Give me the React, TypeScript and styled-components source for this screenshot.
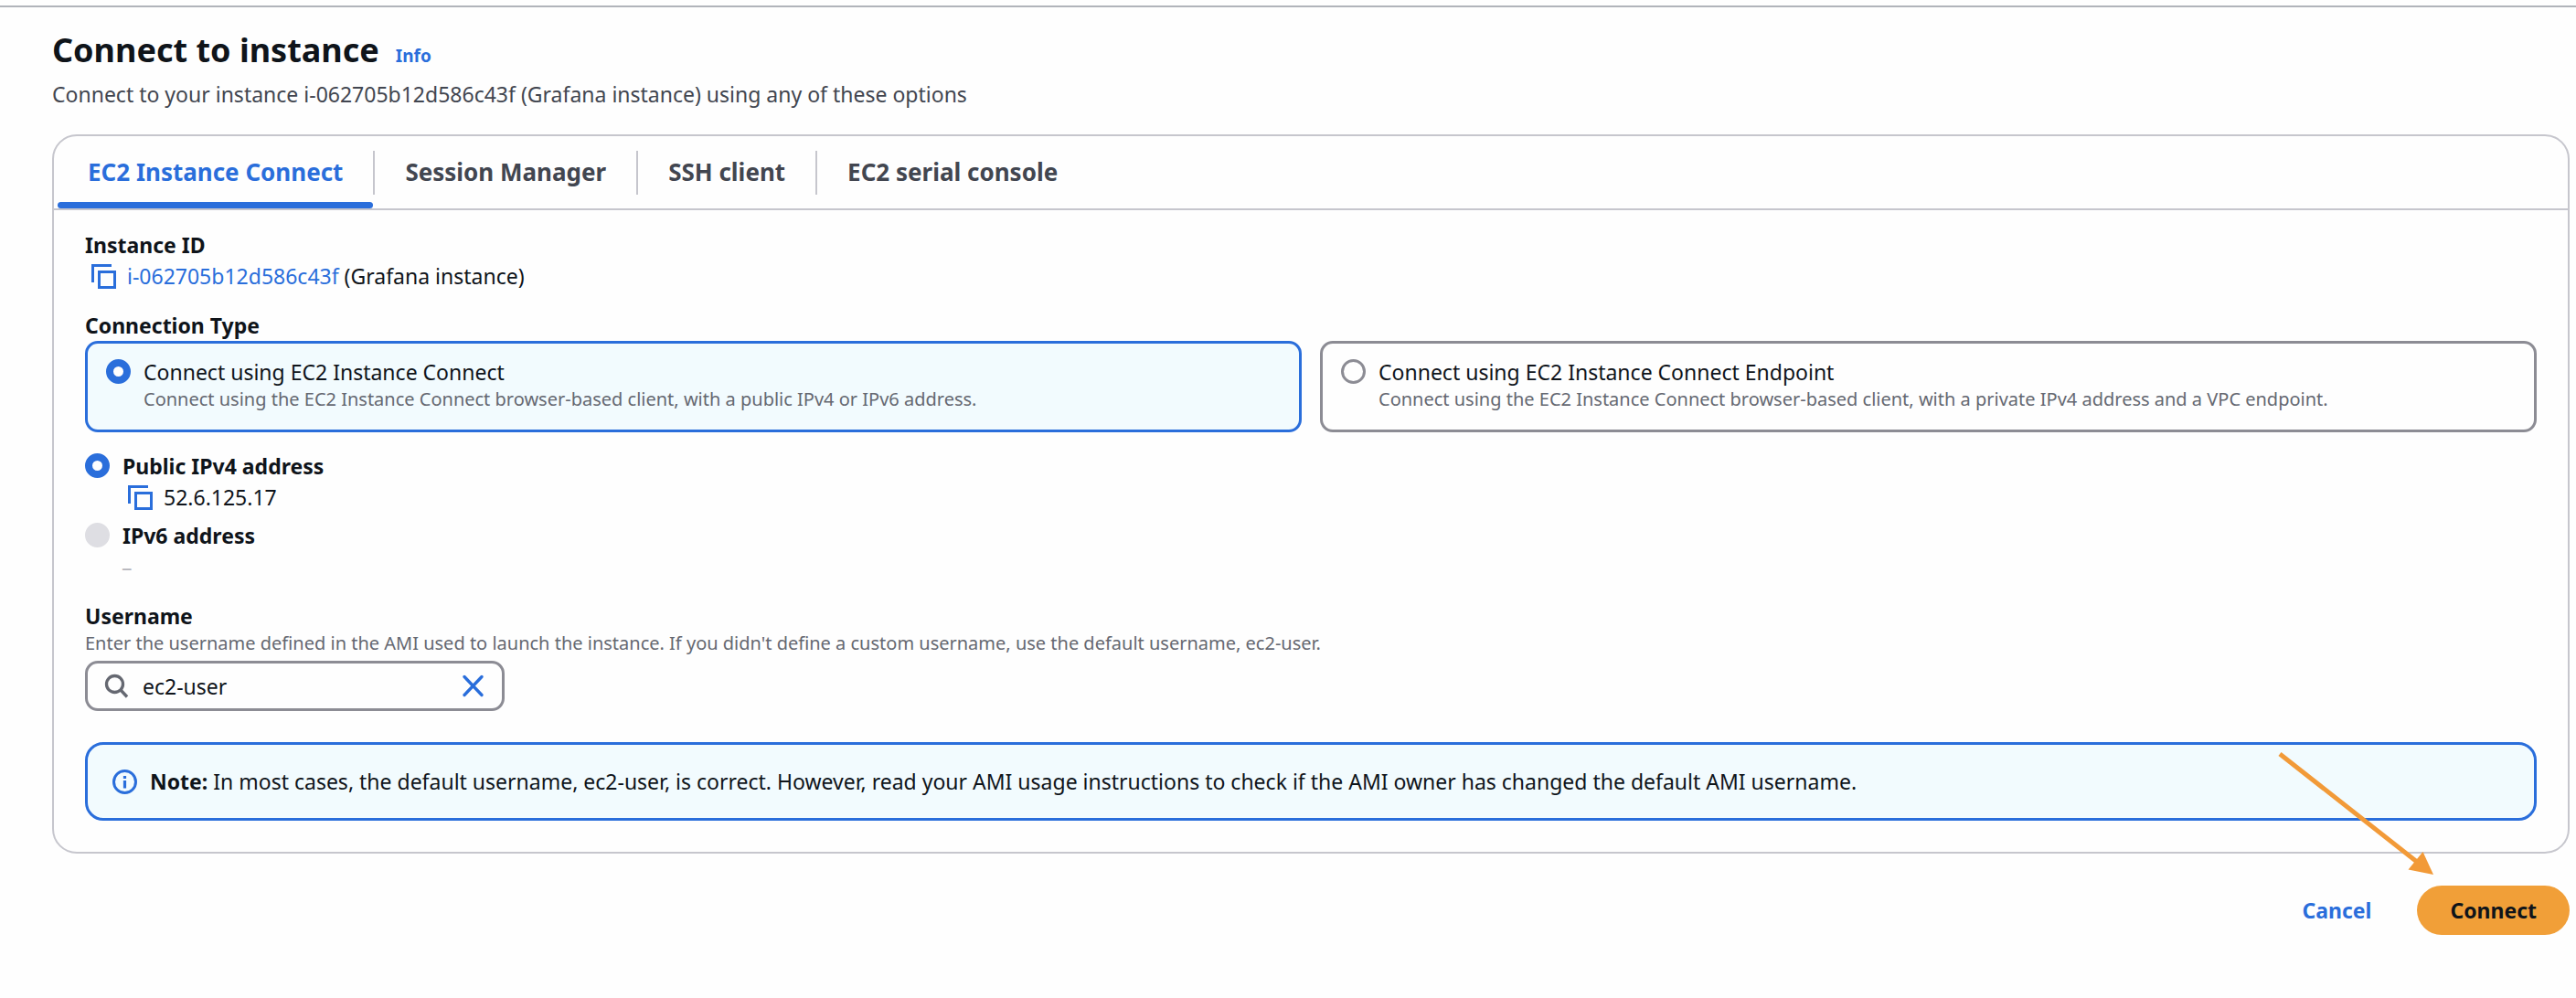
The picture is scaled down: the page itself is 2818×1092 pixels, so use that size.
import React, { useState } from "react";
import styled, { createGlobalStyle, css } from "styled-components";

const color = {
  page: "#fefefe",
  text: "#0f141a",
  secondary: "#424650",
  muted: "#656871",
  blue: "#2a6edb",
  tint: "#f2fbfe",
  line: "#c6c6cd",
  control: "#8c8c94",
  disabled: "#dedee3",
  orange: "#f19f38",
  arrow: "#f29a38",
};

const GlobalStyle = createGlobalStyle`
  *, *::before, *::after { box-sizing: border-box; }
  body {
    margin: 0;
    background: ${color.page};
    color: ${color.text};
    font: 400 23px/34px "Noto Sans", "Open Sans", sans-serif;
  }
  button, input { font: inherit; color: inherit; }
  h1, p { margin: 0; }
`;

const Page = styled.main`
  padding: 6px 0 34px;
`;

const TopRule = styled.div`
  height: 2px;
  background: #b1b4ba;
`;

const Content = styled.div`
  padding: 23px 7px 0 57px;
`;

const Header = styled.header`
  display: flex;
  flex-direction: column;
  gap: 7px;
  margin-bottom: 27px;
`;

const TitleRow = styled.div`
  display: flex;
  align-items: baseline;
  gap: 18px;
`;

const Title = styled.h1`
  font-size: 36px;
  line-height: 48px;
  font-weight: 700;
`;

const Link = styled.a<{ $info?: boolean }>`
  color: ${color.blue};
  text-decoration: none;
  ${(p) =>
    p.$info &&
    css`
      font-size: 19px;
      line-height: 26px;
      font-weight: 700;
    `}
`;

const Subtitle = styled.p`
  color: ${color.secondary};
`;

const Panel = styled.section`
  border: 2px solid ${color.line};
  border-radius: 27px;
`;

const TabList = styled.div`
  display: flex;
  align-items: flex-start;
  padding-left: 4px;
  border-bottom: 2px solid ${color.line};
`;

const Tab = styled.button<{ $active: boolean }>`
  position: relative;
  border: 0;
  background: none;
  padding: 22px 33px 23px;
  font-size: 26px;
  font-weight: 700;
  color: ${(p) => (p.$active ? color.blue : color.secondary)};
  cursor: pointer;

  &::after {
    content: "";
    display: ${(p) => (p.$active ? "block" : "none")};
    position: absolute;
    left: 0;
    right: 0;
    bottom: 0;
    height: 7px;
    border-radius: 4px;
    background: ${color.blue};
  }
`;

const TabDivider = styled.span`
  width: 2px;
  height: 48px;
  margin-top: 16px;
  background: ${color.line};
`;

const PanelBody = styled.div`
  display: flex;
  flex-direction: column;
  gap: 20px;
  padding: 21px 34px 34px;
`;

const FieldLabel = styled.div`
  font-weight: 700;
`;

const Help = styled.span`
  display: block;
  font-size: 20px;
  line-height: 26px;
  font-weight: 400;
  color: ${color.muted};
`;

const CopyRow = styled.div`
  display: flex;
  align-items: center;
  gap: 12px;
  padding-left: 7px;
`;

const IconButton = styled.button`
  display: flex;
  border: 0;
  padding: 0;
  background: none;
  color: ${color.blue};
  cursor: pointer;
`;

const Tiles = styled.div`
  display: grid;
  grid-template-columns: 1fr 1fr;
  gap: 20px;
`;

const Tile = styled.label<{ $selected: boolean }>`
  display: flex;
  gap: 14px;
  padding: 14px 20px 20px;
  border: 3px solid ${(p) => (p.$selected ? color.blue : color.control)};
  border-radius: 14px;
  background: ${(p) => (p.$selected ? color.tint : "transparent")};
  cursor: pointer;
`;

const Radio = styled.input.attrs({ type: "radio" })`
  appearance: none;
  flex: none;
  width: 27px;
  height: 27px;
  margin: 3px 0 0;
  border: 3px solid ${color.control};
  border-radius: 50%;
  background: ${color.page};

  &:checked {
    border: 8px solid ${color.blue};
  }
  &:disabled {
    border-color: ${color.disabled};
    background: ${color.disabled};
  }
`;

const AddressGroup = styled.div`
  display: flex;
  flex-direction: column;
  gap: 8px;
`;

const AddressLabel = styled.label`
  display: flex;
  gap: 14px;
  font-weight: 700;
`;

const AddressValue = styled.div`
  padding-left: 40px;
`;

const Dash = styled(AddressValue)`
  color: #b4b4bb;
`;

const UsernameField = styled.div`
  display: flex;
  flex-direction: column;
  margin-bottom: 14px;
`;

const UsernameLabel = styled.label`
  font-weight: 700;
`;

const SearchBox = styled.div`
  display: flex;
  align-items: center;
  gap: 15px;
  width: 459px;
  height: 55px;
  margin-top: 6px;
  padding: 0 18px;
  border: 3px solid ${color.control};
  border-radius: 14px;
  color: ${color.muted};
`;

const SearchInput = styled.input`
  flex: 1;
  min-width: 0;
  border: 0;
  outline: 0;
  padding: 0;
  background: none;
  color: ${color.text};
`;

const Note = styled.div`
  display: flex;
  align-items: center;
  gap: 14px;
  padding: 23px 27px;
  border: 3px solid ${color.blue};
  border-radius: 20px;
  background: ${color.tint};

  svg {
    flex: none;
    color: ${color.blue};
  }
`;

const Actions = styled.footer`
  position: relative;
  display: flex;
  justify-content: flex-end;
  gap: 14px;
  margin-top: 35px;
`;

const Button = styled.button<{ $primary?: boolean }>`
  border: 0;
  border-radius: 27px;
  padding: 10px 36px;
  font-weight: 700;
  background: ${(p) => (p.$primary ? color.orange : "transparent")};
  color: ${(p) => (p.$primary ? color.text : color.blue)};
  cursor: pointer;
`;

const Arrow = styled.svg`
  position: absolute;
  right: 143px;
  top: -149px;
  pointer-events: none;
`;

const CopyIcon = () => (
  <svg width="27" height="27" viewBox="0 0 27 27" fill="none" stroke="currentColor" strokeWidth="3" aria-hidden="true">
    <path d="M1.5 20V1.5H22" />
    <path d="M8.5 8.5H25.5V25.5H8.5Z" />
  </svg>
);

const SearchIcon = () => (
  <svg width="27" height="27" viewBox="0 0 27 27" fill="none" stroke="currentColor" strokeWidth="3.3" aria-hidden="true">
    <circle cx="11.5" cy="11.5" r="9" />
    <path d="M18 18L25 25.5" />
  </svg>
);

const CloseIcon = () => (
  <svg width="27" height="27" viewBox="0 0 27 27" fill="none" stroke="currentColor" strokeWidth="3.3" strokeLinecap="round" aria-hidden="true">
    <path d="M4 3.5L23 23.5M23 3.5L4 23.5" />
  </svg>
);

const InfoIcon = () => (
  <svg width="27" height="27" viewBox="0 0 27 27" fill="none" stroke="currentColor" strokeWidth="3" aria-hidden="true">
    <circle cx="13.5" cy="13.5" r="12" />
    <path d="M13.5 12V20.5M13.5 7V10" strokeWidth="3.2" />
  </svg>
);

const tabs = ["EC2 Instance Connect", "Session Manager", "SSH client", "EC2 serial console"];

const connectionTypes = [
  {
    title: "Connect using EC2 Instance Connect",
    help: "Connect using the EC2 Instance Connect browser-based client, with a public IPv4 or IPv6 address.",
  },
  {
    title: "Connect using EC2 Instance Connect Endpoint",
    help: "Connect using the EC2 Instance Connect browser-based client, with a private IPv4 address and a VPC endpoint.",
  },
];

export default function App() {
  const [tab, setTab] = useState(0);
  const [connection, setConnection] = useState(0);
  const [username, setUsername] = useState("ec2-user");

  return (
    <>
      <GlobalStyle />
      <Page>
        <TopRule />
        <Content>
          <Header>
            <TitleRow>
              <Title>Connect to instance</Title>
              <Link $info href="#info">Info</Link>
            </TitleRow>
            <Subtitle>
              Connect to your instance i-062705b12d586c43f (Grafana instance) using any of these options
            </Subtitle>
          </Header>

          <Panel>
            <TabList role="tablist">
              {tabs.map((name, i) => (
                <React.Fragment key={name}>
                  {i > 0 && <TabDivider />}
                  <Tab role="tab" aria-selected={tab === i} $active={tab === i} onClick={() => setTab(i)}>
                    {name}
                  </Tab>
                </React.Fragment>
              ))}
            </TabList>

            <PanelBody role="tabpanel">
              <div>
                <FieldLabel>Instance ID</FieldLabel>
                <CopyRow>
                  <IconButton aria-label="Copy instance ID"><CopyIcon /></IconButton>
                  <span>
                    <Link href="#instance">i-062705b12d586c43f</Link> (Grafana instance)
                  </span>
                </CopyRow>
              </div>

              <div role="radiogroup" aria-labelledby="connection-type">
                <FieldLabel id="connection-type">Connection Type</FieldLabel>
                <Tiles>
                  {connectionTypes.map((type, i) => (
                    <Tile key={type.title} $selected={connection === i}>
                      <Radio name="connection" checked={connection === i} onChange={() => setConnection(i)} />
                      <span>
                        {type.title}
                        <Help>{type.help}</Help>
                      </span>
                    </Tile>
                  ))}
                </Tiles>
              </div>

              <AddressGroup>
                <div>
                  <AddressLabel>
                    <Radio name="address" defaultChecked />
                    Public IPv4 address
                  </AddressLabel>
                  <AddressValue>
                    <CopyRow>
                      <IconButton aria-label="Copy IPv4 address"><CopyIcon /></IconButton>
                      52.6.125.17
                    </CopyRow>
                  </AddressValue>
                </div>
                <div>
                  <AddressLabel>
                    <Radio name="address" disabled />
                    IPv6 address
                  </AddressLabel>
                  <Dash>–</Dash>
                </div>
              </AddressGroup>

              <UsernameField>
                <UsernameLabel htmlFor="username">Username</UsernameLabel>
                <Help id="username-help">
                  Enter the username defined in the AMI used to launch the instance. If you didn't define a custom
                  username, use the default username, ec2-user.
                </Help>
                <SearchBox>
                  <SearchIcon />
                  <SearchInput
                    id="username"
                    aria-describedby="username-help"
                    value={username}
                    onChange={(e) => setUsername(e.target.value)}
                  />
                  <IconButton aria-label="Clear username" onClick={() => setUsername("")}><CloseIcon /></IconButton>
                </SearchBox>
              </UsernameField>

              <Note>
                <InfoIcon />
                <p>
                  <strong>Note:</strong> In most cases, the default username, ec2-user, is correct. However, read your
                  AMI usage instructions to check if the AMI owner has changed the default AMI username.
                </p>
              </Note>
            </PanelBody>
          </Panel>

          <Actions>
            <Button>Cancel</Button>
            <Button $primary>Connect</Button>
            <Arrow width="180" height="140" viewBox="0 0 180 140" aria-hidden="true">
              <path d="M6 5L156 123" stroke={color.arrow} strokeWidth="5" />
              <path d="M174 137L146.500 131.500L162.500 112Z" fill={color.arrow} />
            </Arrow>
          </Actions>
        </Content>
      </Page>
    </>
  );
}
